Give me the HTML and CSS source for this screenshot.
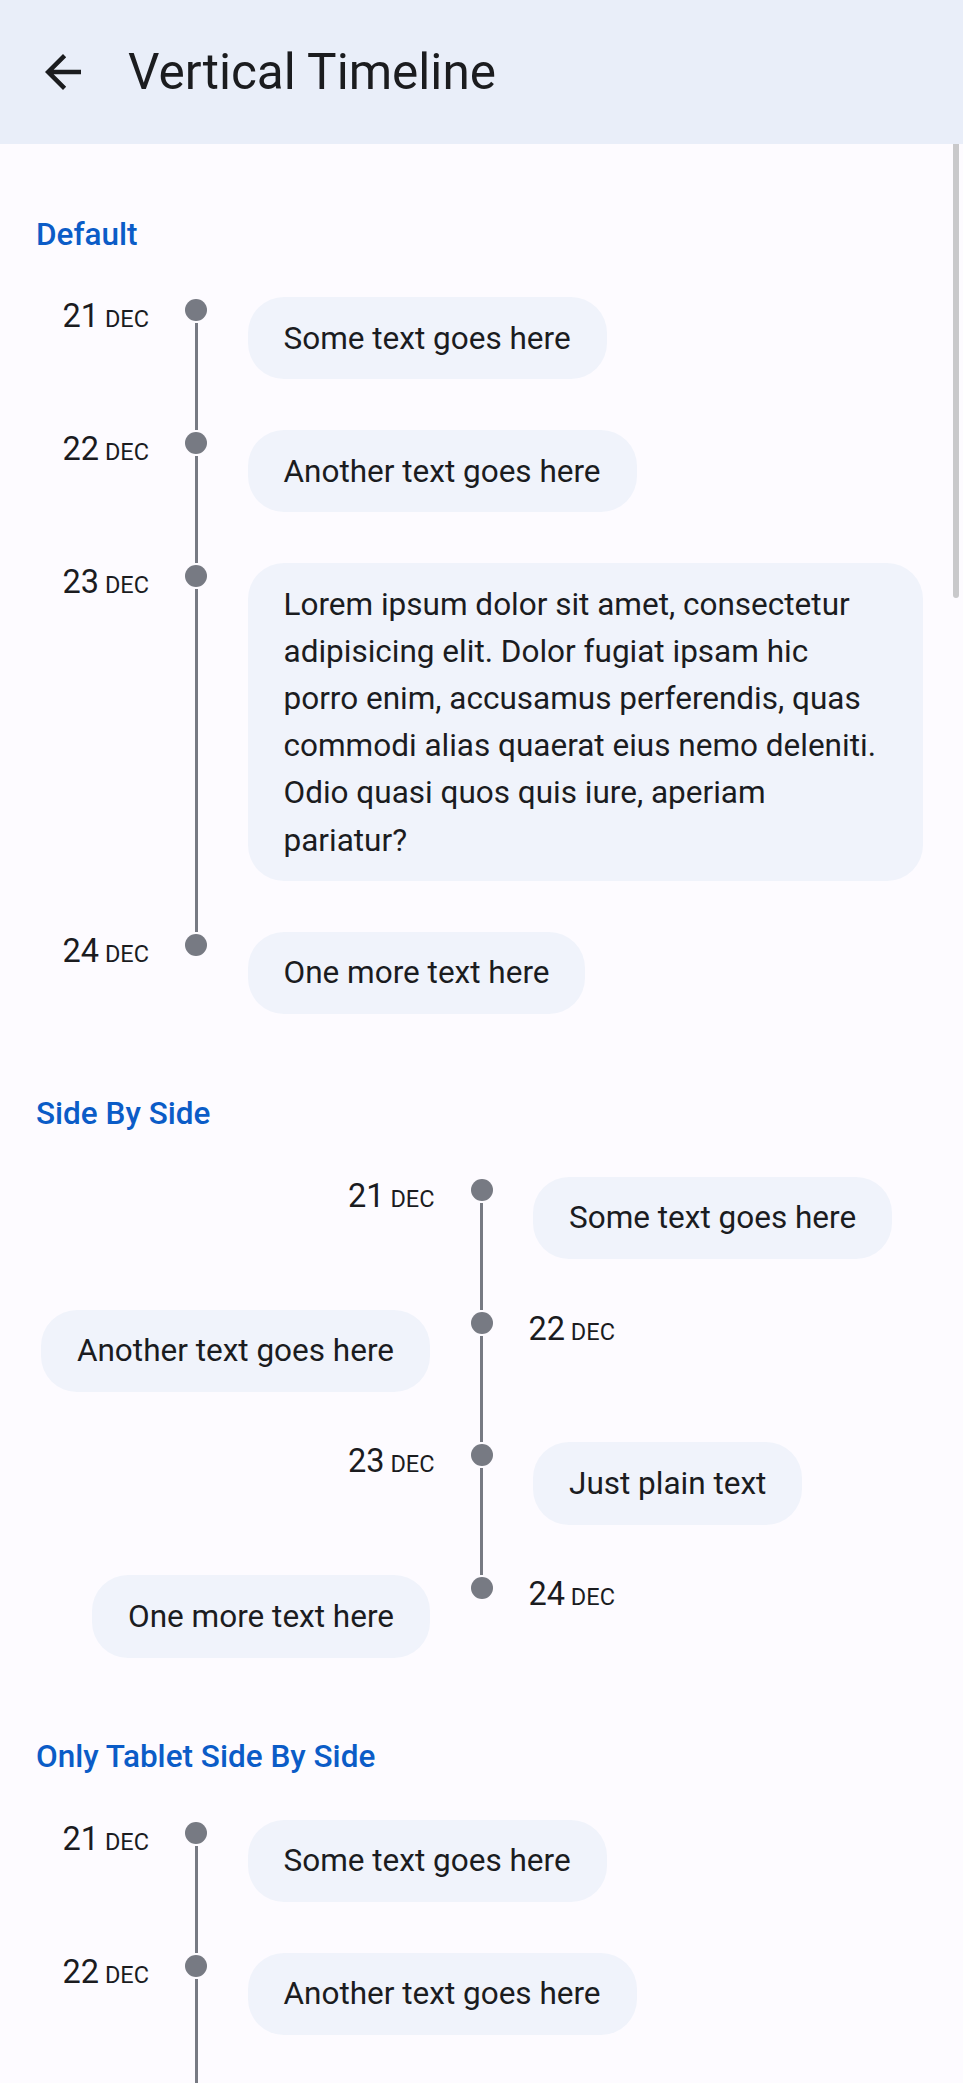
FILE: index.html
```html
<!DOCTYPE html>
<html lang="en">
<head>
<meta charset="utf-8">
<title>Vertical Timeline</title>
<link rel="stylesheet" href="styles.css">
</head>
<body>
<header class="appbar">
  <svg class="back" viewBox="0 0 24 24" aria-hidden="true"><path d="M20 11H7.83l5.59-5.59L12 4l-8 8 8 8 1.41-1.41L7.83 13H20v-2z"/></svg>
  <h1 class="title">Vertical Timeline</h1>
</header>
<main class="content">
  <section class="section">
    <h2 class="section-title">Default</h2>
    <div class="timeline">
      <div class="row">
        <div class="date">21<span class="mon"> DEC</span></div>
        <div class="axis"><span class="dot"></span><span class="line"></span></div>
        <div class="card">Some text goes here</div>
      </div>
      <div class="row">
        <div class="date">22<span class="mon"> DEC</span></div>
        <div class="axis"><span class="dot"></span><span class="line"></span></div>
        <div class="card">Another text goes here</div>
      </div>
      <div class="row">
        <div class="date">23<span class="mon"> DEC</span></div>
        <div class="axis"><span class="dot"></span><span class="line"></span></div>
        <div class="card">Lorem ipsum dolor sit amet, consectetur adipisicing elit. Dolor fugiat ipsam hic porro enim, accusamus perferendis, quas commodi alias quaerat eius nemo deleniti. Odio quasi quos quis iure, aperiam pariatur?</div>
      </div>
      <div class="row">
        <div class="date">24<span class="mon"> DEC</span></div>
        <div class="axis"><span class="dot"></span><span class="line"></span></div>
        <div class="card">One more text here</div>
      </div>
    </div>
  </section>

  <section class="section">
    <h2 class="section-title">Side By Side</h2>
    <div class="timeline sbs">
      <div class="row">
        <div class="side left"><div class="date">21<span class="mon"> DEC</span></div></div>
        <div class="axis"><span class="dot"></span><span class="line"></span></div>
        <div class="side right"><div class="card">Some text goes here</div></div>
      </div>
      <div class="row">
        <div class="side left"><div class="card">Another text goes here</div></div>
        <div class="axis"><span class="dot"></span><span class="line"></span></div>
        <div class="side right"><div class="date">22<span class="mon"> DEC</span></div></div>
      </div>
      <div class="row">
        <div class="side left"><div class="date">23<span class="mon"> DEC</span></div></div>
        <div class="axis"><span class="dot"></span><span class="line"></span></div>
        <div class="side right"><div class="card">Just plain text</div></div>
      </div>
      <div class="row">
        <div class="side left"><div class="card">One more text here</div></div>
        <div class="axis"><span class="dot"></span><span class="line"></span></div>
        <div class="side right"><div class="date">24<span class="mon"> DEC</span></div></div>
      </div>
    </div>
  </section>

  <section class="section">
    <h2 class="section-title">Only Tablet Side By Side</h2>
    <div class="timeline">
      <div class="row">
        <div class="date">21<span class="mon"> DEC</span></div>
        <div class="axis"><span class="dot"></span><span class="line"></span></div>
        <div class="card">Some text goes here</div>
      </div>
      <div class="row">
        <div class="date">22<span class="mon"> DEC</span></div>
        <div class="axis"><span class="dot"></span><span class="line"></span></div>
        <div class="card">Another text goes here</div>
      </div>
      <div class="row">
        <div class="date">23<span class="mon"> DEC</span></div>
        <div class="axis"><span class="dot"></span><span class="line"></span></div>
        <div class="card">Just plain text</div>
      </div>
      <div class="row">
        <div class="date">24<span class="mon"> DEC</span></div>
        <div class="axis"><span class="dot"></span><span class="line"></span></div>
        <div class="card">One more text here</div>
      </div>
    </div>
  </section>
</main>
<div class="scrollbar"></div>
</body>
</html>
```

FILE: styles.css
```css
html {
  overflow: hidden;
}
body {
  margin: 0;
  background: #fdfbff;
  font-family: Roboto, "Noto Sans", "Liberation Sans", sans-serif;
  color: #1b1c1f;
}

.appbar {
  display: flex;
  align-items: center;
  height: 144px;
  padding-left: 36px;
  background: #e9eef9;
  box-sizing: border-box;
}
.back {
  width: 54px;
  height: 54px;
  fill: #1b1c1f;
  flex: none;
}
.title {
  margin: 0 0 0 38px;
  font-size: 49.5px;
  font-weight: 400;
  line-height: 63px;
  color: #1b1c1f;
}

.content {
  padding: 67.75px 36px 0;
}
.section {
  margin-bottom: 26.3px;
}
.section-title {
  margin: 0 0 40.5px;
  font-size: 31.5px;
  font-weight: 500;
  line-height: 45px;
  color: #0b5cc7;
}

.row {
  display: flex;
  align-items: stretch;
  padding-bottom: 50.7px;
}
.date {
  align-self: flex-start;
  width: 113px;
  margin-right: 36px;
  text-align: right;
  font-size: 32.5px;
  line-height: 39px;
  white-space: nowrap;
  color: #1b1c1f;
  flex: none;
}
.mon {
  font-size: 23.5px;
}
.axis {
  width: 22px;
  flex: none;
  display: flex;
  flex-direction: column;
  align-items: center;
}
.dot {
  width: 22px;
  height: 22px;
  margin-top: 2px;
  border-radius: 50%;
  background: #777a83;
  flex: none;
}
.line {
  flex: 1;
  width: 3px;
  margin-top: 2px;
  margin-bottom: -50.7px;
  background: #777a83;
}
.row:last-child .line {
  visibility: hidden;
}
.card {
  align-self: flex-start;
  margin-left: 40.5px;
  margin-right: 4px;
  padding: 17.5px 36px;
  border-radius: 36px;
  background: #f0f3fb;
  font-size: 31.5px;
  line-height: 47.2px;
  color: #1b1c1f;
  flex: 0 1 auto;
}

.sbs .row {
  display: grid;
  grid-template-columns: 1fr 22px 1fr;
}
.side {
  display: flex;
  align-items: flex-start;
}
.side.left {
  justify-content: flex-end;
}
.side.right {
  justify-content: flex-start;
}
.sbs .date {
  width: auto;
  margin: 0;
  text-align: left;
}
.sbs .left .date {
  margin-right: 36px;
}
.sbs .right .date {
  margin-left: 36px;
}
.sbs .card {
  margin: 0;
}
.sbs .left .card {
  margin-right: 40.5px;
}
.sbs .right .card {
  margin-left: 40.5px;
}

.scrollbar {
  position: fixed;
  left: 953px;
  top: 144px;
  width: 6px;
  height: 454px;
  border-radius: 0 0 3px 3px;
  background: #c9c9cb;
}
```
